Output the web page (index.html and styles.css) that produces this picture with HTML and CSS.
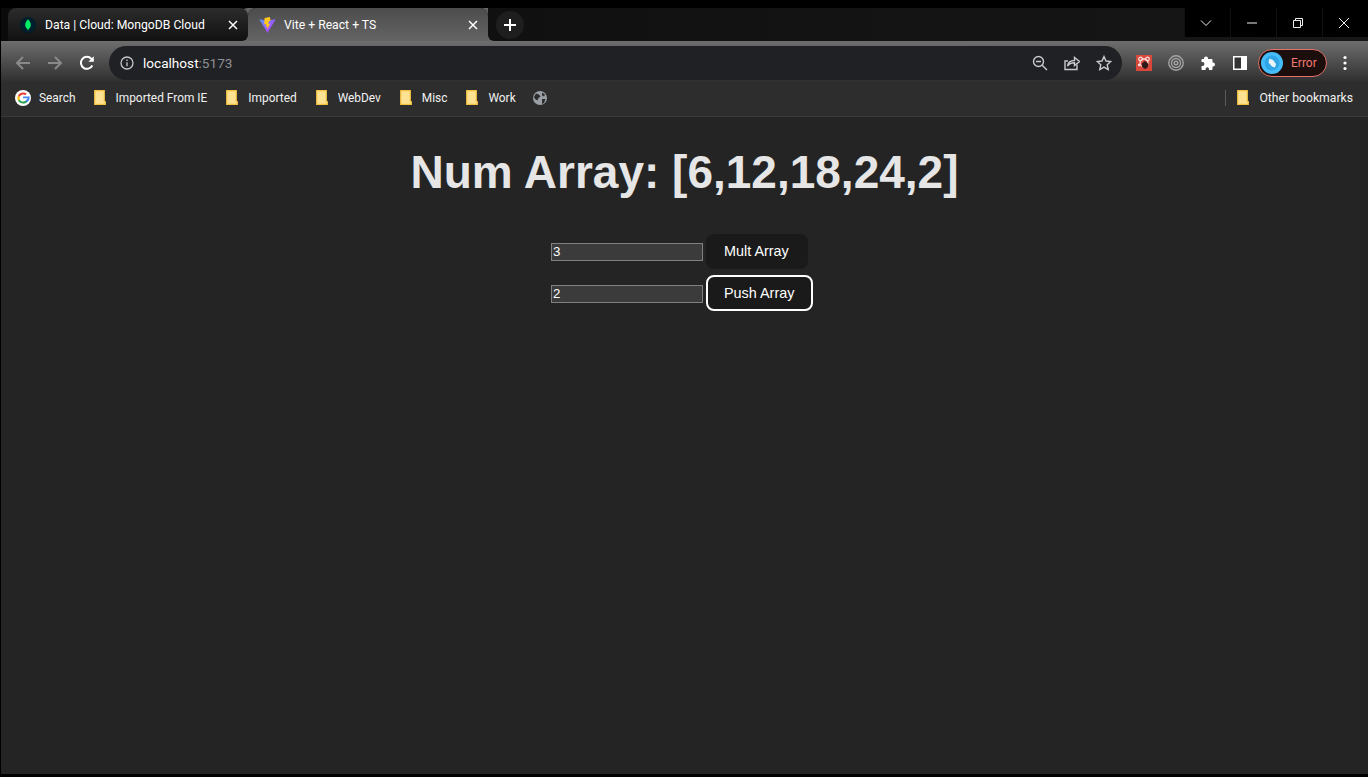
FILE: index.html
```html
<!DOCTYPE html>
<html lang="en">

<head>
  <meta charset="UTF-8">
  <meta name="viewport" content="width=device-width, initial-scale=1.0">
  <title>Vite + React + TS</title>
  <link rel="stylesheet" href="styles.css">
</head>

<body>
  <div class="window">
    <header class="chrome">
      <div class="tabstrip">
        <div class="tab tab-back">
          <svg class="favicon" viewBox="0 0 16 16">
            <circle cx="8" cy="8" r="8" fill="#001e2b" />
            <path d="M8 2.2c2 2 3 4 2.8 6-.2 2-1.4 3.300-2.500 4.300L8 14l-.3-1.500C6.600 11.500 5.400 10.200 5.200 8.200 5 6.200 6 4.200 8 2.200z" fill="#00ed64" />
          </svg>
          <span class="tab-title">Data | Cloud: MongoDB Cloud</span>
          <svg class="tab-close" viewBox="0 0 10 10">
            <path d="M1 1l8 8M9 1l-8 8" />
          </svg>
        </div>
        <div class="tab tab-active">
          <svg class="favicon favicon-vite" viewBox="0 0 17 16">
            <defs>
              <linearGradient id="viteGrad" x1="0" y1="0" x2="1" y2="0.800">
                <stop offset="0" stop-color="#5a9cff" />
                <stop offset="1" stop-color="#bd34fe" />
              </linearGradient>
            </defs>
            <path d="M0.300 2.300L8.500 16 16.700 2.300 8.500 3.800z" fill="url(#viteGrad)" />
            <path d="M10.800 0L5.600 1 5.200 7.500l2-.4-.4 2.700 1.500-.3-.4 3.200 3.400-6.200-2 .4.700-2.800 1.700-.4z" fill="#ffc61c" />
          </svg>
          <span class="tab-title">Vite + React + TS</span>
          <svg class="tab-close" viewBox="0 0 10 10">
            <path d="M1 1l8 8M9 1l-8 8" />
          </svg>
        </div>
        <div class="strip-rest">
          <div class="new-tab">
            <svg viewBox="0 0 12 12">
              <path d="M6 0v12M0 6h12" />
            </svg>
          </div>
          <div class="strip-space"></div>
          <div class="win-controls">
            <div class="win-btn">
              <svg viewBox="0 0 12 12">
                <path d="M1 3.500l5 5 5-5" />
              </svg>
            </div>
            <div class="win-btn">
              <svg viewBox="0 0 12 12">
                <path d="M1 6h10" />
              </svg>
            </div>
            <div class="win-btn">
              <svg viewBox="0 0 12 12">
                <path d="M1.500 3.500h7v7h-7zM3.500 3.500v-2h7v7h-2" />
              </svg>
            </div>
            <div class="win-btn">
              <svg viewBox="0 0 12 12">
                <path d="M1 1l10 10M11 1L1 11" />
              </svg>
            </div>
          </div>
        </div>
      </div>

      <div class="toolbar">
        <svg class="nav-icon nav-off" viewBox="0 0 16 16">
          <path d="M15 8H2M8 2L2 8l6 6" />
        </svg>
        <svg class="nav-icon nav-off" viewBox="0 0 16 16">
          <path d="M1 8h13M8 2l6 6-6 6" />
        </svg>
        <svg class="nav-icon" viewBox="0 0 16 16">
          <path d="M13.300 10.500A6 6 0 1 1 12.400 3.800L14 5.400" />
          <path class="filled" d="M14.800 1.300v5.400H9.400z" />
        </svg>
        <div class="omnibox">
          <svg class="info-icon" viewBox="0 0 14 14">
            <circle cx="7" cy="7" r="6" />
            <path d="M7 6.200v4M7 3.400v1.500" />
          </svg>
          <span class="url">localhost<span class="url-port">:5173</span></span>
          <div class="omni-actions">
            <svg viewBox="0 0 16 16">
              <circle cx="6.500" cy="6.500" r="5" />
              <path d="M10.200 10.200L15 15M4 6.500h5" />
            </svg>
            <svg viewBox="0 0 16 16">
              <path d="M13 9.500V14.500H1V6h3" />
              <path d="M3.500 11c.5-3.500 3-5.500 7-5.500V2.500L15.500 6.500 10.500 10.500V7.700C7.500 7.700 5 8.700 3.500 11z" />
            </svg>
            <svg viewBox="0 0 16 16">
              <path d="M8 1.500l2 4.500 4.800.5-3.600 3.200 1 4.800L8 12.100 3.800 14.500l1-4.800L1.200 6.500 6 6z" />
            </svg>
          </div>
        </div>
        <div class="ext ext-first">
          <svg viewBox="0 0 16 16">
            <rect width="16" height="16" fill="#d9463a" />
            <circle cx="4.500" cy="4" r="1.800" fill="none" stroke="#f8dcd8" stroke-width="1.300" />
            <circle cx="11.500" cy="4" r="1.800" fill="none" stroke="#f8dcd8" stroke-width="1.300" />
            <circle cx="8" cy="8" r="4" fill="none" stroke="#f8dcd8" stroke-width="1.300" />
            <circle cx="3" cy="10" r="1.200" fill="#f8dcd8" />
            <path d="M6 8.500l3-2.500 3.500 3-1 3.500-2.500 1.500-3-2z" fill="#2c1a18" />
          </svg>
        </div>
        <div class="ext">
          <svg viewBox="0 0 16 16" class="rings">
            <circle cx="8" cy="8" r="7.200" />
            <circle cx="8" cy="8" r="4.500" />
            <circle cx="8" cy="8" r="1.800" />
          </svg>
        </div>
        <div class="ext">
          <svg viewBox="0 0 16 16">
            <path d="M6 1.500c1.200 0 2 .9 2 2V4h3.500c.6 0 1 .4 1 1v2.500h.5a2 2 0 0 1 0 4h-.5V14c0 .6-.4 1-1 1H9v-1a1.700 1.700 0 0 0-3.400 0v1H2.500c-.6 0-1-.4-1-1v-3h1a2 2 0 0 0 0-4h-1V5c0-.6.4-1 1-1H4v-.5c0-1.100.9-2 2-2z" fill="#fff" />
          </svg>
        </div>
        <div class="ext">
          <svg viewBox="0 0 16 16">
            <rect x="1" y="1" width="14" height="14" fill="#fff" />
            <rect x="2.500" y="2.500" width="6.500" height="11" fill="#333" />
          </svg>
        </div>
        <div class="profile-chip">
          <svg class="avatar" viewBox="0 0 22 22">
            <circle cx="11" cy="11" r="11" fill="#45bdfb" />
            <circle cx="11" cy="11" r="7.500" fill="#2fa5e6" />
            <path d="M8.500 6.500l3.500 1.500 3 4-1 3.500-3-1-3.500-4z" fill="#e8f4fa" />
          </svg>
          <span>Error</span>
        </div>
        <svg class="menu-dots" viewBox="0 0 4 16">
          <circle cx="2" cy="2.500" r="1.600" />
          <circle cx="2" cy="8" r="1.600" />
          <circle cx="2" cy="13.500" r="1.600" />
        </svg>
      </div>

      <nav class="bookmarks">
        <div class="bookmark bookmark-search">
          <svg class="g-logo" viewBox="0 0 16 16">
            <circle cx="8" cy="8" r="8" fill="#fff" />
            <path d="M12.800 8.300H8.100v-1.700h6.500c.5 3.800-2.500 7-6.600 7z" fill="#4285f4" />
            <path d="M8 13.600c-2.200 0-4.100-1.200-5-3l1.800-1.300c.5 1.300 1.700 2.300 3.200 2.300 1 0 1.800-.3 2.400-.8l1.700 1.400c-1 .9-2.500 1.400-4.100 1.400z" fill="#34a853" />
            <path d="M3 10.600c-.8-1.600-.8-3.500 0-5.200l1.800 1.300c-.3.800-.3 1.800 0 2.600z" fill="#fbbc05" />
            <path d="M3 5.400c1-1.800 2.800-3 5-3 1.500 0 2.800.5 3.800 1.400l-1.500 1.500C9.700 4.800 8.900 4.400 8 4.400c-1.500 0-2.700 1-3.200 2.300z" fill="#ea4335" />
          </svg>
          <span>Search</span>
        </div>
        <div class="bookmark"><svg class="folder" viewBox="0 0 12 15"><path d="M.7.700h9.600v10.800h1v2.800H.7z" /></svg><span>Imported From IE</span></div>
        <div class="bookmark"><svg class="folder" viewBox="0 0 12 15"><path d="M.7.700h9.600v10.800h1v2.800H.7z" /></svg><span>Imported</span></div>
        <div class="bookmark"><svg class="folder" viewBox="0 0 12 15"><path d="M.7.700h9.600v10.800h1v2.800H.7z" /></svg><span>WebDev</span></div>
        <div class="bookmark"><svg class="folder" viewBox="0 0 12 15"><path d="M.7.700h9.600v10.800h1v2.800H.7z" /></svg><span>Misc</span></div>
        <div class="bookmark"><svg class="folder" viewBox="0 0 12 15"><path d="M.7.700h9.600v10.800h1v2.800H.7z" /></svg><span>Work</span></div>
        <svg class="globe" viewBox="0 0 14 14">
          <circle cx="7" cy="7" r="7" fill="#9aa0a6" />
          <path d="M3 2.500l3 1 1.500 2-2 1.500-1 2.500L2 8 1 6zM9 1.500l3 2-1 2-2-1zM9 8l3.500 0-1.500 4-2 1z" fill="#2d2d2d" />
        </svg>
        <div class="bm-space"></div>
        <div class="bm-sep"></div>
        <div class="bookmark bookmark-other"><svg class="folder" viewBox="0 0 12 15"><path d="M.7.700h9.600v10.800h1v2.800H.7z" /></svg><span>Other bookmarks</span></div>
      </nav>
    </header>

    <main class="page">
      <h1>Num Array: [6,12,18,24,2]</h1>
      <div class="array-form">
        <div class="form-row">
          <input type="number" value="3">
          <button type="button">Mult Array</button>
        </div>
        <div class="form-row">
          <input type="number" value="2">
          <button type="button" class="focused">Push Array</button>
        </div>
      </div>
    </main>
  </div>
</body>

</html>
```
FILE: styles.css
```css
/* page and window frame */
html,
body {
  height: 100%;
}

body {
  margin: 0;
  background-color: #000;
  overflow: hidden;
  font-family: Roboto, "Open Sans", sans-serif;
}

.window {
  height: 777px;
  box-sizing: border-box;
  padding: 8px 0 3px 1px;
  display: flex;
  flex-direction: column;
}

/* tab strip */
.tabstrip {
  height: 33px;
  display: flex;
  background-color: #0a0a0a;
}

.tab {
  width: 240px;
  height: 33px;
  box-sizing: border-box;
  padding: 0 10px 0 12px;
  border-radius: 8px 8px 0 0;
  display: flex;
  align-items: center;
  color: #fff;
  font-size: 12.200px;
}

.tab-back {
  margin-left: 7px;
  border-bottom-right-radius: 6px;
  background: linear-gradient(to bottom, #2c2c2c, #111);
  position: relative;
  z-index: 1;
}

.tab-active {
  background: linear-gradient(to bottom, #4c4c4c, #646464);
  box-shadow: -8px 0 0 #666, 8px 0 0 #666;
}

.favicon {
  width: 16px;
  height: 16px;
  flex: none;
}

.favicon-vite {
  width: 17px;
  margin-left: -1px;
}

.tab-title {
  margin-left: 8px;
  flex: 1;
  white-space: nowrap;
}

.tab-back .tab-title {
  margin-left: 9px;
}

.tab-close {
  width: 10px;
  height: 10px;
  fill: none;
  stroke: #fff;
  stroke-width: 1.500;
}

.strip-rest {
  flex: 1;
  display: flex;
  border-bottom-left-radius: 6px;
  background: linear-gradient(to right, #101010, #171717);
  position: relative;
  z-index: 1;
}

.new-tab {
  width: 28px;
  height: 28px;
  margin: 3px 0 0 8px;
  border-radius: 50%;
  background-color: #1e1e1e;
  display: flex;
  align-items: center;
  justify-content: center;
}

.new-tab svg {
  width: 12px;
  height: 12px;
  fill: none;
  stroke: #fff;
  stroke-width: 2;
}

.strip-space {
  flex: 1;
}

.win-controls {
  height: 29px;
  display: flex;
  background-color: #000;
}

.win-btn {
  width: 46px;
  padding-right: 4px;
  display: flex;
  align-items: center;
  justify-content: center;
  border-left: 1px solid #111;
  box-sizing: border-box;
}

.win-btn svg {
  width: 12px;
  height: 12px;
  fill: none;
  stroke: #eee;
  stroke-width: 1;
}

/* address bar */
.toolbar {
  height: 42px;
  box-sizing: border-box;
  padding: 2px 0 0 14px;
  display: flex;
  align-items: center;
  background: linear-gradient(to bottom, #6e6e6e, #2d2d2d);
}

.nav-icon {
  width: 16px;
  height: 16px;
  margin-right: 16px;
  flex: none;
  fill: none;
  stroke: #fff;
  stroke-width: 2;
}

.nav-icon .filled {
  fill: #fff;
  stroke: none;
}

.nav-off {
  stroke: #8a8a8a;
}

.omnibox {
  width: 1013px;
  height: 34px;
  margin-left: -2px;
  box-sizing: border-box;
  padding: 0 10px 0 11px;
  border-radius: 17px;
  background-color: #202124;
  display: flex;
  align-items: center;
  font-size: 13.600px;
  color: #fff;
}

.info-icon {
  width: 14px;
  height: 14px;
  fill: none;
  stroke: #c4c7c9;
  stroke-width: 1.300;
}

.url {
  margin-left: 9px;
}

.url-port {
  color: #8c8f93;
}

.omni-actions {
  margin-left: auto;
  display: flex;
  gap: 16px;
}

.omni-actions svg {
  width: 16px;
  height: 16px;
  fill: none;
  stroke: #c7c9cb;
  stroke-width: 1.400;
}

.ext {
  width: 32px;
  display: flex;
  justify-content: center;
}

.ext svg {
  width: 16px;
  height: 16px;
}

.ext-first {
  margin-left: 6px;
}

.rings {
  fill: none;
  stroke: #a4a4a4;
  stroke-width: 1.400;
}

.profile-chip {
  width: 69px;
  height: 28px;
  margin-left: 2px;
  box-sizing: border-box;
  padding-left: 2px;
  border: 1px solid #e2736a;
  border-radius: 14px;
  background-color: #1c0e0d;
  display: flex;
  align-items: center;
  gap: 8px;
  font-size: 12px;
  color: #f07a6e;
}

.avatar {
  width: 22px;
  height: 22px;
}

.menu-dots {
  width: 4px;
  height: 16px;
  margin-left: 16px;
  fill: #fff;
}

/* bookmarks bar */
.bookmarks {
  height: 34px;
  box-sizing: border-box;
  padding: 0 15px 4px 14px;
  display: flex;
  align-items: center;
  background-color: #2d2d2d;
  border-bottom: 1px solid #3a3a3a;
  color: #f1f1f1;
  font-size: 11.900px;
}

.bookmark {
  display: flex;
  align-items: center;
  gap: 10px;
  margin-right: 19px;
  white-space: nowrap;
}

.bookmark-search {
  margin-right: 18px;
}

.bookmark-other {
  margin-right: 0;
  font-size: 12.200px;
}

.g-logo {
  width: 16px;
  height: 16px;
  margin-right: -2px;
}

.folder {
  width: 12px;
  height: 15px;
  fill: #fde293;
  stroke: #f3c23f;
  stroke-width: 1.200;
}

.globe {
  width: 14px;
  height: 14px;
  margin-left: -2px;
}

.bm-space {
  flex: 1;
}

.bm-sep {
  width: 1px;
  height: 16px;
  margin-right: 11px;
  background-color: #5a5a5a;
}

/* the page itself */
.page {
  flex: 1;
  background-color: #242424;
  color: rgba(255, 255, 255, 0.87);
  font-family: "Liberation Sans", Arial, sans-serif;
  text-align: center;
}

.page h1 {
  margin: 26px 0 0;
  font-size: 46px;
  line-height: 58px;
  font-weight: bold;
  color: #e6e6e6;
}

.array-form {
  margin-top: 32px;
  padding-left: 550px;
  display: flex;
  flex-direction: column;
  align-items: flex-start;
  gap: 6px;
}

.form-row {
  height: 36px;
  display: flex;
  align-items: center;
  gap: 3px;
}

.form-row input {
  width: 152px;
  height: 18px;
  margin-top: 1px;
  box-sizing: border-box;
  padding: 0 1px;
  border: 1px solid #808080;
  background-color: #3b3b3b;
  color: #fff;
  font-family: "Liberation Sans", Arial, sans-serif;
  font-size: 13.333px;
  appearance: textfield;
}

.form-row button {
  height: 35px;
  padding: 0 18px 0 17px;
  border: 1px solid transparent;
  border-radius: 8px;
  background-color: #1a1a1a;
  color: #fff;
  font-family: "Liberation Sans", Arial, sans-serif;
  font-size: 14.400px;
  font-weight: 500;
}

.form-row button.focused {
  height: 36px;
  padding: 0 17px 0 16px;
  border: 2px solid #fff;
}
```
